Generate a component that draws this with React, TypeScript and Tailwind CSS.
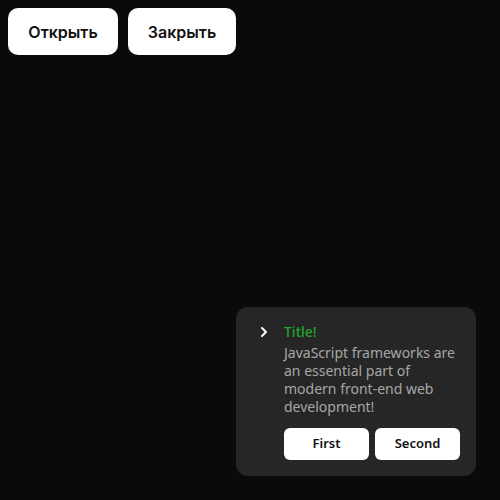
import { ChevronRight } from 'lucide-react'

export default function App() {
  return (
    <div className="min-h-[500px] w-full bg-[#0a0a0a]" style={{ fontFamily: '"Noto Sans", sans-serif' }}>
      <div className="flex gap-2.5 p-2">
        <button className="h-[47px] w-[110px] rounded-[10px] bg-white text-[16px] font-semibold text-[#111] font-['Inter',sans-serif]">
          Открыть
        </button>
        <button className="h-[47px] w-[108px] rounded-[10px] bg-white text-[16px] font-semibold text-[#111] font-['Inter',sans-serif]">
          Закрыть
        </button>
      </div>

      <div className="fixed bottom-6 right-6 flex w-60 gap-3 rounded-xl bg-[#262626] pt-[14px] pr-4 pb-4 pl-5">
        <ChevronRight className="mt-[3px] h-4 w-4 shrink-0 text-white" strokeWidth={3} />
        <div className="flex flex-col">
          <div className="mb-px text-[14px] font-medium leading-[22px] text-[#22a52f]">Title!</div>
          <p className="text-[14px] leading-[18px] text-[#a6a6a6]">
            JavaScript frameworks are an essential part of modern front-end web development!
          </p>
          <div className="mt-3 flex gap-1.5">
            <button className="h-8 flex-1 rounded-md bg-white text-[13px] font-semibold text-[#111]">First</button>
            <button className="h-8 flex-1 rounded-md bg-white text-[13px] font-semibold text-[#111]">Second</button>
          </div>
        </div>
      </div>
    </div>
  )
}
